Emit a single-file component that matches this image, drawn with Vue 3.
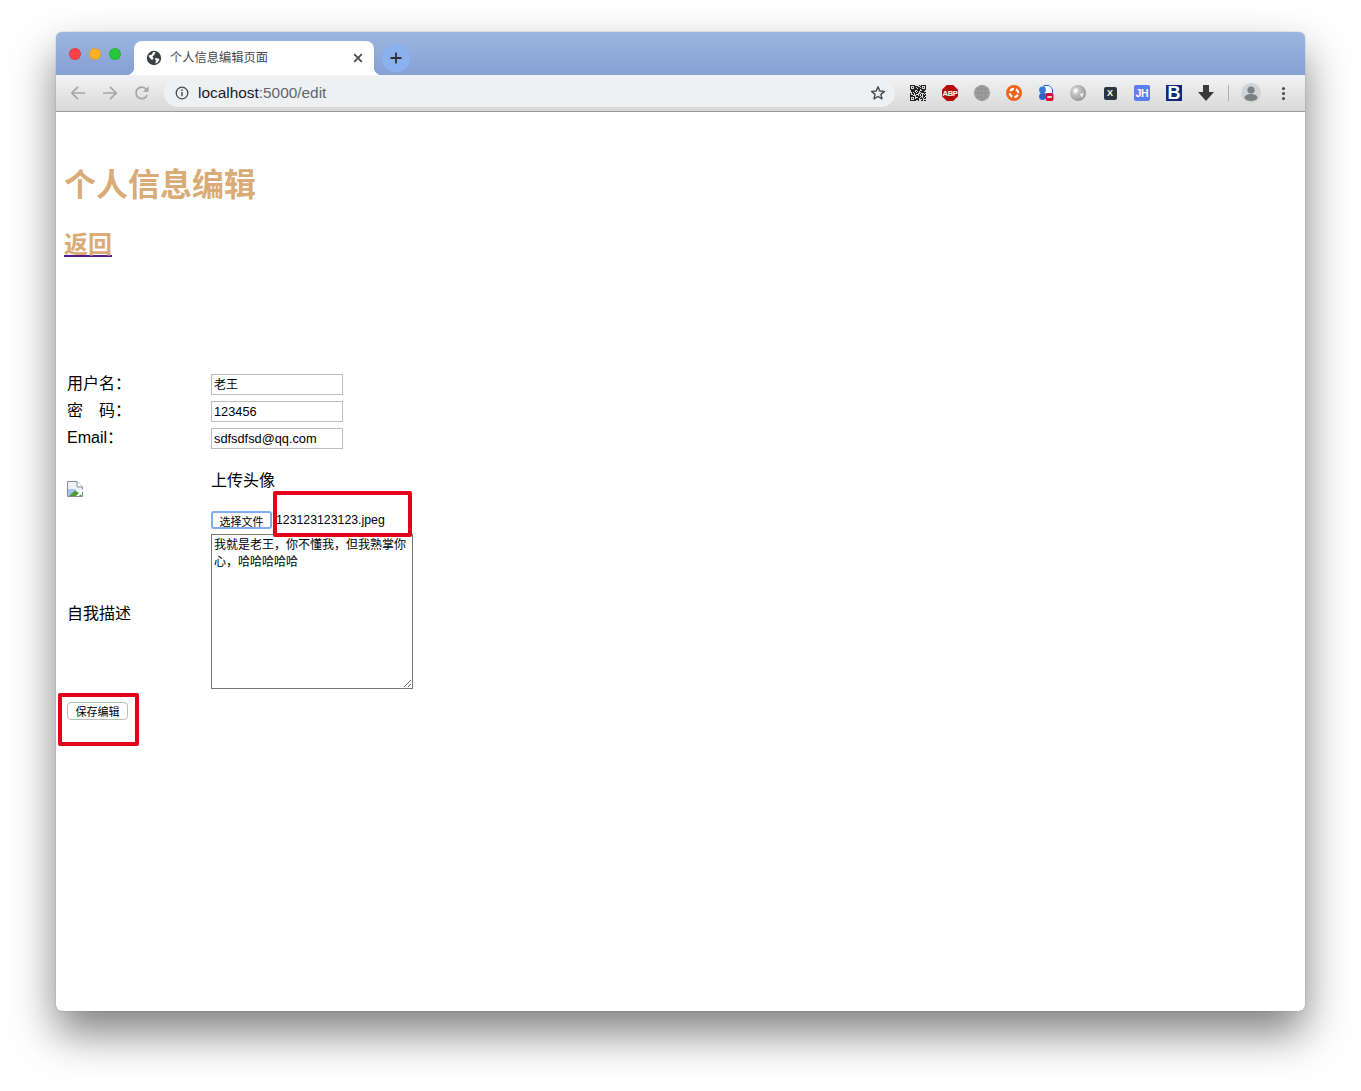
<script setup>
import { ref } from 'vue'

const username = ref('老王')
const password = ref('123456')
const email = ref('sdfsdfsd@qq.com')
const intro = ref('我就是老王，你不懂我，但我熟掌你心，哈哈哈哈哈')

// fake qr code: noise plus three finder squares
const qrCells = []
let seed = 17
for (let y = 0; y < 16; y++) {
  for (let x = 0; x < 16; x++) {
    seed = (seed * 137 + 71) % 1024
    if (seed % 7 < 4) qrCells.push({ x, y })
  }
}
const finders = [{ x: 0, y: 0 }, { x: 11, y: 0 }, { x: 0, y: 11 }]
</script>

<template>
  <div class="screen">
    <div class="window">
      <div class="titlebar">
        <div class="lights">
          <span class="light red"></span>
          <span class="light yellow"></span>
          <span class="light green"></span>
        </div>
        <div class="tab">
          <svg class="favicon" width="16" height="16" viewBox="0 0 16 16">
            <circle cx="8" cy="8" r="7.2" fill="#3c4043" />
            <path d="M2.5 5.5 L6 4.5 L7 2 L9.5 2.2 L8.5 4.5 L6.5 6.5 L7.5 8.5 L6 10 L3.5 7.5 Z" fill="#fff" />
            <path d="M9 8 L12.5 8.5 L13.5 10 L11 13 L9.5 13.5 L9.8 11 Z" fill="#fff" />
          </svg>
          <span class="tab-title">个人信息编辑页面</span>
          <svg class="tab-close" width="10" height="10" viewBox="0 0 10 10">
            <path d="M1.2 1.2 L8.8 8.8 M8.8 1.2 L1.2 8.8" stroke="#45484c" stroke-width="1.7" />
          </svg>
        </div>
        <div class="newtab">
          <svg width="12" height="12" viewBox="0 0 12 12">
            <path d="M6 0.5 V11.5 M0.5 6 H11.5" stroke="#2f3136" stroke-width="1.8" />
          </svg>
        </div>
      </div>

      <div class="toolbar">
        <div class="navbtn">
          <svg width="16" height="16" viewBox="0 0 16 16" fill="none" stroke="#a3a5a8" stroke-width="1.7">
            <path d="M15 8 H2 M8 1.8 L1.8 8 L8 14.2" />
          </svg>
        </div>
        <div class="navbtn">
          <svg width="16" height="16" viewBox="0 0 16 16" fill="none" stroke="#a3a5a8" stroke-width="1.7">
            <path d="M1 8 H14 M8 1.8 L14.2 8 L8 14.2" />
          </svg>
        </div>
        <div class="navbtn">
          <svg width="16" height="16" viewBox="0 0 16 16" fill="none">
            <path d="M13.2 10 A5.8 5.8 0 1 1 12.3 4.2" stroke="#a3a5a8" stroke-width="1.7" />
            <path d="M14.6 1.2 V6.8 H9 Z" fill="#a3a5a8" />
          </svg>
        </div>
        <div class="omnibox">
          <svg width="14" height="14" viewBox="0 0 14 14" fill="none">
            <circle cx="7" cy="7" r="5.8" stroke="#45484c" stroke-width="1.3" />
            <rect x="6.3" y="6" width="1.4" height="4.2" fill="#45484c" />
            <rect x="6.3" y="3.6" width="1.4" height="1.4" fill="#45484c" />
          </svg>
          <span class="url"><b>localhost</b>:5000/edit</span>
          <svg class="star" width="16" height="16" viewBox="0 0 16 16" fill="none">
            <path d="M8 1.8 L9.8 6 L14.4 6.4 L10.9 9.4 L12 13.9 L8 11.5 L4 13.9 L5.1 9.4 L1.6 6.4 L6.2 6 Z" stroke="#45484c" stroke-width="1.4" stroke-linejoin="round" />
          </svg>
        </div>
        <div class="extensions">
          <div class="ext">
            <svg width="16" height="16" viewBox="0 0 16 16">
              <rect width="16" height="16" fill="#d9d9d9" />
              <rect v-for="(c, i) in qrCells" :key="i" :x="c.x" :y="c.y" width="1" height="1" fill="#222" />
              <g v-for="f in finders" :key="f.x + '-' + f.y">
                <rect :x="f.x" :y="f.y" width="5" height="5" fill="#222" />
                <rect :x="f.x + 1" :y="f.y + 1" width="3" height="3" fill="#d9d9d9" />
                <rect :x="f.x + 2" :y="f.y + 2" width="1" height="1" fill="#222" />
              </g>
            </svg>
          </div>
          <div class="ext">
            <svg width="16" height="16" viewBox="0 0 16 16">
              <path d="M4.8 0 H11.2 L16 4.8 V11.2 L11.2 16 H4.8 L0 11.2 V4.8 Z" fill="#b30c0c" />
            </svg>
            <span class="abp">ABP</span>
          </div>
          <div class="ext">
            <svg width="16" height="16" viewBox="0 0 16 16" fill="none">
              <circle cx="8" cy="8" r="8" fill="#a0a0a0" />
              <path d="M0 8 H16 M1.5 4 H14.5 M1.5 12 H14.5 M8 0 V16 M8 0 C3 4 3 12 8 16 M8 0 C13 4 13 12 8 16" stroke="#8b8b8b" stroke-width="0.7" />
            </svg>
          </div>
          <div class="ext">
            <svg width="16" height="16" viewBox="0 0 16 16" fill="none">
              <circle cx="8" cy="8" r="8" fill="#f0641e" />
              <circle cx="8" cy="8" r="4.2" stroke="#fff" stroke-width="2.2" stroke-dasharray="4.4 2.2" transform="rotate(22 8 8)" />
            </svg>
          </div>
          <div class="ext">
            <svg width="16" height="16" viewBox="0 0 16 16" fill="none">
              <path d="M6 0.5 H11 L14.5 4 V9 H6 Z" fill="#fff" stroke="#2f62c8" stroke-width="1" />
              <circle cx="4.5" cy="5" r="3.4" fill="#3b78dc" />
              <circle cx="4.5" cy="11.5" r="3.4" fill="#2f62c8" />
              <rect x="7.5" y="8" width="8" height="8" rx="2" fill="#d5102c" />
              <rect x="9.2" y="11.2" width="4.6" height="1.6" fill="#fff" />
            </svg>
          </div>
          <div class="ext">
            <svg width="16" height="16" viewBox="0 0 16 16">
              <defs>
                <radialGradient id="sphere" cx="0.35" cy="0.35" r="0.75">
                  <stop offset="0" stop-color="#dedede" />
                  <stop offset="1" stop-color="#8f8f8f" />
                </radialGradient>
              </defs>
              <circle cx="8" cy="8" r="8" fill="url(#sphere)" />
              <path d="M3 5 L7 3 L8 6 L5 9 Z M10 9 L14 8 L12 13 Z" fill="#fff" opacity="0.85" />
            </svg>
          </div>
          <div class="ext">
            <span class="ext-badge dark">X</span>
          </div>
          <div class="ext">
            <span class="ext-badge blue">JH</span>
          </div>
          <div class="ext">
            <span class="ext-badge navy">B</span>
          </div>
          <div class="ext">
            <svg width="16" height="16" viewBox="0 0 16 16">
              <path d="M5 0 H11 V7 H16 L8 16 L0 7 H5 Z" fill="#3a3a3a" />
            </svg>
          </div>
        </div>
        <div class="sep"></div>
        <div class="avatar">
          <svg width="20" height="20" viewBox="0 0 20 20">
            <circle cx="10" cy="7" r="3.6" fill="#7c7f83" />
            <ellipse cx="10" cy="14.5" rx="6.5" ry="3.6" fill="#7c7f83" />
          </svg>
        </div>
        <div class="menu">
          <i></i><i></i><i></i>
        </div>
      </div>

      <div class="page">
        <h1>个人信息编辑</h1>
        <h2><a class="back" href="#">返回</a></h2>

        <table class="form-table">
          <tbody>
            <tr>
              <td class="label">用户名：</td>
              <td><input v-model="username" class="field field-cjk" type="text" /></td>
            </tr>
            <tr>
              <td class="label">密&emsp;码：</td>
              <td><input v-model="password" class="field" type="text" /></td>
            </tr>
            <tr>
              <td class="label">Email：</td>
              <td><input v-model="email" class="field" type="text" /></td>
            </tr>
            <tr>
              <td class="avatar-cell">
                <svg class="broken" width="16" height="16" viewBox="0 0 16 16">
                  <path d="M0.5 0.5 H10 L15.5 6 V15.5 H0.5 Z" fill="#eef1f6" stroke="#8d8d8d" />
                  <path d="M10 0.5 V6 H15.5" fill="#fff" stroke="#8d8d8d" />
                  <path d="M1 8 H9 L7 15 H1 Z" fill="#a9c4ec" />
                  <path d="M2 15 L8 9.5 L12 12 L15 15 Z" fill="#4f9a35" />
                  <path d="M9 15 L16 8 V10 L12 15 Z" fill="#fff" />
                </svg>
              </td>
              <td class="upload-cell">
                <p class="upload-title">上传头像</p>
                <div class="file-row">
                  <button class="file-btn" type="button">选择文件</button>
                  <span class="file-name">123123123123.jpeg</span>
                  <div class="mark mark-file"></div>
                </div>
              </td>
            </tr>
            <tr>
              <td class="intro-label">自我描述</td>
              <td class="intro-cell"><textarea v-model="intro" class="intro"></textarea></td>
            </tr>
            <tr>
              <td class="save-cell">
                <div class="save-wrap">
                  <button class="save" type="button">保存编辑</button>
                  <div class="mark mark-save"></div>
                </div>
              </td>
              <td></td>
            </tr>
          </tbody>
        </table>
      </div>
    </div>
  </div>
</template>

<style scoped>
.screen {
  box-sizing: border-box;
  width: 1361px;
  height: 1091px;
  padding: 32px 56px 0;
  overflow: hidden;
  background: #fff;
  font-family: "Liberation Sans", "Noto Sans CJK SC", sans-serif;
  color: #000;
}

.window {
  display: flex;
  flex-direction: column;
  height: 979px;
  border-radius: 6px;
  overflow: hidden;
  background: #fff;
  box-shadow: 0 0 1px rgba(0, 0, 0, 0.55), 0 22px 44px rgba(0, 0, 0, 0.5);
}

.titlebar {
  display: flex;
  flex: none;
  height: 43px;
  background: linear-gradient(#9cb6e2, #85a0d2);
}

.lights {
  display: flex;
  gap: 8px;
  width: 78px;
  padding: 16px 0 0 13px;
  box-sizing: border-box;
}

.light {
  width: 12px;
  height: 12px;
  border-radius: 50%;
  box-sizing: border-box;
  border: 1px solid rgba(0, 0, 0, 0.1);
}

.red { background: #fc4245; }
.yellow { background: #fdb024; }
.green { background: #26c83a; }

.tab {
  position: relative;
  display: flex;
  align-items: center;
  box-sizing: border-box;
  width: 240px;
  height: 34px;
  margin-top: 9px;
  padding: 0 11px 0 12px;
  background: #fff;
  border-radius: 8px 8px 0 0;
}

.tab::before,
.tab::after {
  content: "";
  position: absolute;
  bottom: 0;
  width: 8px;
  height: 8px;
  background: radial-gradient(circle at 0 0, transparent 8px, #fff 8.5px);
}

.tab::before { left: -8px; }

.tab::after {
  right: -8px;
  background: radial-gradient(circle at 100% 0, transparent 8px, #fff 8.5px);
}

.favicon {
  flex: none;
}

.tab-title {
  margin: 0 0 1px 8px;
  font-size: 12.25px;
  line-height: 16px;
  color: #45484c;
}

.tab-close {
  margin-left: auto;
}

.newtab {
  display: flex;
  align-items: center;
  justify-content: center;
  width: 28px;
  height: 28px;
  margin: 12px 0 0 8px;
  border-radius: 50%;
  background: #8ab0ee;
}

.toolbar {
  display: flex;
  flex: none;
  align-items: center;
  box-sizing: border-box;
  height: 37px;
  padding: 0 6px;
  background: linear-gradient(#f2f3f4, #d8d8d8);
  border-bottom: 1px solid #9a9a9a;
}

.navbtn {
  display: flex;
  align-items: center;
  justify-content: center;
  width: 32px;
  height: 32px;
}

.omnibox {
  display: flex;
  align-items: center;
  box-sizing: border-box;
  width: 731px;
  height: 28px;
  margin-left: 6px;
  padding: 0 9px 0 11px;
  border-radius: 14px;
  background: #eff0f2;
}

.url {
  margin-left: 9px;
  font-size: 15.4px;
  color: #60656b;
}

.url b {
  font-weight: 400;
  color: #1c1c1c;
}

.star {
  margin-left: auto;
}

.extensions {
  display: flex;
  margin-left: 7px;
}

.ext {
  position: relative;
  display: flex;
  align-items: center;
  justify-content: center;
  width: 32px;
  height: 32px;
}

.abp {
  position: absolute;
  left: 8px;
  width: 16px;
  text-align: center;
  font-size: 7.6px;
  font-weight: 700;
  letter-spacing: -0.4px;
  color: #fff;
}

.ext-badge {
  display: flex;
  align-items: center;
  justify-content: center;
  font-weight: 700;
  color: #fff;
}

.dark {
  width: 13px;
  height: 13px;
  border-radius: 2px;
  background: #2b3640;
  font-size: 9px;
}

.blue {
  width: 16px;
  height: 16px;
  border-radius: 2px;
  background: #5a7df0;
  font-size: 10.5px;
  letter-spacing: -0.3px;
}

.navy {
  width: 16px;
  height: 16px;
  background: #15277a;
  font-size: 18px;
  line-height: 16px;
}

.sep {
  width: 1px;
  height: 16px;
  margin: 0 6px;
  background: #b0b0b0;
}

.avatar {
  display: flex;
  align-items: center;
  justify-content: center;
  width: 20px;
  height: 20px;
  margin-left: 6px;
  border-radius: 50%;
  background: #d2d3d5;
  overflow: hidden;
}

.menu {
  display: flex;
  flex-direction: column;
  align-items: center;
  gap: 2px;
  margin-left: 21px;
}

.menu i {
  width: 3px;
  height: 3px;
  border-radius: 50%;
  background: #45484c;
}

.page {
  flex: 1;
  padding: 45px 8px 0;
}

h1 {
  margin: 8px 0 0;
  font-size: 32px;
  line-height: 40px;
  font-weight: 700;
  color: #d9ab76;
}

h2 {
  margin: 25px 0 0;
  font-size: 24px;
  line-height: 30px;
  font-weight: 700;
  color: #d9ab76;
}

.back {
  color: #d9ab76;
  text-decoration: underline;
  text-decoration-color: #551a8b;
}

.form-table {
  margin-top: 111px;
  border-collapse: separate;
  border-spacing: 2px;
}

.form-table td {
  padding: 1px;
  vertical-align: top;
}

.label {
  width: 140px;
  height: 23px;
  font-size: 16px;
  line-height: 20px;
}

.field {
  display: block;
  box-sizing: border-box;
  width: 132px;
  height: 21px;
  margin: 0;
  padding: 1px 2px;
  border: 1px solid #bdbdbd;
  font-family: "Liberation Sans", "Noto Sans CJK SC", sans-serif;
  font-size: 12.8px;
  color: #000;
  outline: none;
}

.field-cjk {
  padding-bottom: 3px;
  font-size: 12px;
}

.broken {
  display: block;
}

.form-table .avatar-cell {
  padding-top: 27px;
}

.form-table .upload-cell {
  padding-bottom: 2px;
}

.upload-title {
  margin: 16px 0 20px;
  font-size: 16px;
  line-height: 20px;
}

.file-row {
  position: relative;
  display: flex;
  align-items: center;
  height: 18px;
}

.file-btn {
  box-sizing: border-box;
  width: 61px;
  height: 18px;
  padding: 0 0 2px;
  border: 2px solid #80aef0;
  border-radius: 3px;
  background: #fff;
  font-family: "Noto Sans CJK SC", sans-serif;
  font-size: 11px;
  color: #000;
}

.file-name {
  margin-left: 4px;
  font-size: 12.3px;
}

.mark {
  position: absolute;
  box-sizing: border-box;
  border: 4px solid #e2001a;
  border-radius: 2px;
  pointer-events: none;
}

.mark-file {
  left: 62px;
  top: -20px;
  width: 139px;
  height: 46px;
}

.form-table .intro-label {
  vertical-align: middle;
  font-size: 16px;
}

.intro {
  display: block;
  box-sizing: border-box;
  width: 202px;
  height: 155px;
  margin: 0;
  padding: 2px;
  border: 1px solid #767676;
  font-family: "Liberation Sans", "Noto Sans CJK SC", sans-serif;
  font-size: 12px;
  line-height: 17px;
  color: #000;
  outline: none;
}

.form-table .save-cell {
  padding-top: 10px;
}

.save-wrap {
  position: relative;
  height: 44px;
}

.save {
  box-sizing: border-box;
  display: block;
  width: 61px;
  height: 18px;
  padding: 0 0 2px;
  border: 1px solid #bbb;
  border-radius: 4px;
  background: #fff;
  font-family: "Noto Sans CJK SC", sans-serif;
  font-size: 11px;
  color: #000;
}

.mark-save {
  left: -9px;
  top: -9px;
  width: 81px;
  height: 53px;
}
</style>

<style>
html, body {
  margin: 0;
  background: #fff;
}
</style>
